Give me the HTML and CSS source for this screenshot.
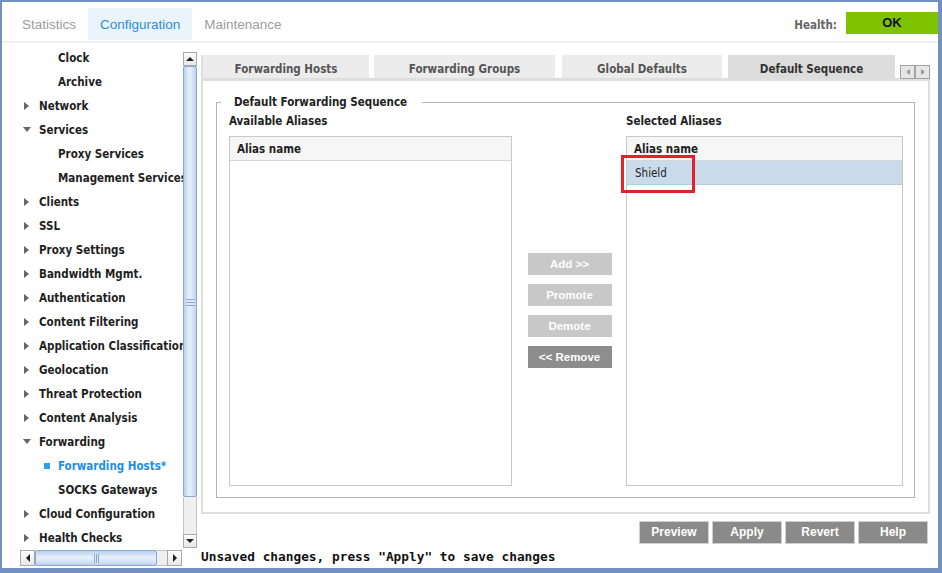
FILE: index.html
```html
<!DOCTYPE html>
<html>
<head>
<meta charset="utf-8">
<title>Configuration - Forwarding Hosts</title>
<link rel="stylesheet" href="styles.css">
</head>
<body>
<div class="frame">
  <header class="topbar">
    <nav class="nav">
      <a class="nav-tab">Statistics</a>
      <a class="nav-tab active">Configuration</a>
      <a class="nav-tab">Maintenance</a>
    </nav>
    <div class="health">
      <span class="health-label">Health:</span>
      <span class="health-ok">OK</span>
    </div>
  </header>

  <div class="main">
    <aside class="sidebar">
      <div class="tree-area">
        <div class="tree-view">
          <ul class="tree">
            <li class="l2">Clock</li>
            <li class="l2">Archive</li>
            <li class="l1 closed"><span class="tw"></span>Network</li>
            <li class="l1 open"><span class="tw"></span>Services</li>
            <li class="l2">Proxy Services</li>
            <li class="l2">Management Services</li>
            <li class="l1 closed"><span class="tw"></span>Clients</li>
            <li class="l1 closed"><span class="tw"></span>SSL</li>
            <li class="l1 closed"><span class="tw"></span>Proxy Settings</li>
            <li class="l1 closed"><span class="tw"></span>Bandwidth Mgmt.</li>
            <li class="l1 closed"><span class="tw"></span>Authentication</li>
            <li class="l1 closed"><span class="tw"></span>Content Filtering</li>
            <li class="l1 closed"><span class="tw"></span>Application Classification</li>
            <li class="l1 closed"><span class="tw"></span>Geolocation</li>
            <li class="l1 closed"><span class="tw"></span>Threat Protection</li>
            <li class="l1 closed"><span class="tw"></span>Content Analysis</li>
            <li class="l1 open"><span class="tw"></span>Forwarding</li>
            <li class="l2 current"><span class="dot"></span>Forwarding Hosts*</li>
            <li class="l2">SOCKS Gateways</li>
            <li class="l1 closed"><span class="tw"></span>Cloud Configuration</li>
            <li class="l1 closed"><span class="tw"></span>Health Checks</li>
          </ul>
        </div>
        <div class="vscroll">
          <div class="sb-btn up"></div>
          <div class="vthumb"><span class="grip"></span></div>
          <div class="vtrack"></div>
          <div class="sb-btn down"></div>
        </div>
      </div>
      <div class="hscroll">
        <div class="sb-btn left"></div>
        <div class="hthumb"><span class="grip"></span></div>
        <div class="htrack"></div>
        <div class="sb-btn right"></div>
      </div>
    </aside>

    <section class="content">
      <div class="tabs">
        <div class="tab tab-hosts">Forwarding Hosts</div>
        <div class="tab tab-groups">Forwarding Groups</div>
        <div class="tab tab-defaults">Global Defaults</div>
        <div class="tab tab-seq selected">Default Sequence</div>
        <div class="tab-arrows">
          <span class="tarrow prev"></span>
          <span class="tarrow next"></span>
        </div>
      </div>
      <div class="panel">
        <fieldset class="group">
          <legend>Default Forwarding Sequence</legend>
          <div class="alias-grid">
            <div class="col-label">Available Aliases</div>
            <div class="col-label sel-label">Selected Aliases</div>
            <div class="alias-table avail">
              <div class="th">Alias name</div>
            </div>
            <div class="mover">
              <div class="mbtn">Add &gt;&gt;</div>
              <div class="mbtn">Promote</div>
              <div class="mbtn">Demote</div>
              <div class="mbtn on">&lt;&lt; Remove</div>
            </div>
            <div class="alias-table chosen">
              <div class="th">Alias name</div>
              <div class="row">Shield</div>
              <div class="callout"></div>
            </div>
          </div>
        </fieldset>
      </div>
      <div class="actions">
        <div class="abtn">Preview</div>
        <div class="abtn">Apply</div>
        <div class="abtn">Revert</div>
        <div class="abtn">Help</div>
      </div>
      <div class="status">Unsaved changes, press "Apply" to save changes</div>
    </section>
  </div>
</div>
</body>
</html>
```

FILE: styles.css
```css
* { box-sizing: border-box; }

html, body {
  margin: 0;
  padding: 0;
  background: #ffffff;
}

body {
  font-family: "DejaVu Sans Condensed", "DejaVu Sans", sans-serif;
  font-stretch: condensed;
  font-size: 11.5px;
  color: #1f1f1f;
}

.frame {
  width: 942px;
  height: 573px;
  border: solid #7191c1;
  border-width: 2px 4px 5px 2px;
  display: flex;
  flex-direction: column;
  overflow: hidden;
  background: #fff;
}

/* ---------- top bar ---------- */
.topbar {
  height: 41px;
  flex: none;
  display: flex;
  justify-content: space-between;
  border-bottom: 2px solid #f1f1f1;
}

.nav {
  display: flex;
  padding: 6px 0 0 8px;
  font-family: "Liberation Sans", Arial, sans-serif;
  font-stretch: normal;
  font-size: 13.5px;
}

.nav-tab {
  height: 32px;
  line-height: 33px;
  padding: 0 12px;
  color: #9c9c9c;
}

.nav-tab.active {
  background: #eaf4fc;
  color: #2a8fd8;
}

.health {
  display: flex;
  align-items: flex-start;
  padding-top: 10px;
}

.health-label {
  font-weight: bold;
  color: #666;
  line-height: 22px;
  margin: 2px 9px 0 0;
}

.health-ok {
  width: 92px;
  height: 22px;
  background: #7fc300;
  font-family: "Liberation Sans", Arial, sans-serif;
  font-stretch: normal;
  font-weight: bold;
  font-size: 13px;
  color: #111;
  text-align: center;
  line-height: 21px;
}

/* ---------- main ---------- */
.main {
  flex: 1;
  display: flex;
  min-height: 0;
}

.sidebar {
  width: 195px;
  flex: none;
  display: flex;
  flex-direction: column;
}

.tree-area {
  display: flex;
  height: 505px;
}

.tree-view {
  width: 181px;
  overflow: hidden;
  padding-top: 3px;
}

.tree {
  list-style: none;
  margin: 0;
  padding: 0;
}

.tree li {
  height: 24px;
  line-height: 24px;
  white-space: nowrap;
  font-weight: bold;
  color: #1e1e1e;
}

.tree .l1 { padding-left: 22px; }
.tree .l2 { padding-left: 56px; }

.tw {
  display: inline-block;
  width: 0;
  height: 0;
  vertical-align: middle;
  position: relative;
  top: -1px;
}

.closed .tw {
  border-left: 5px solid #666;
  border-top: 4px solid transparent;
  border-bottom: 4px solid transparent;
  margin-right: 10px;
}

.open .tw {
  border-top: 5px solid #666;
  border-left: 4px solid transparent;
  border-right: 4px solid transparent;
  margin-left: -1px;
  margin-right: 8px;
}

.tree .current { color: #1d8ee0; }

.dot {
  display: inline-block;
  width: 6px;
  height: 6px;
  background: #2aa1e8;
  margin-left: -14px;
  margin-right: 8px;
  vertical-align: middle;
  position: relative;
  top: -1px;
}

/* ---------- drawn scrollbars ---------- */
.vscroll {
  width: 14px;
  margin-top: 9px;
  display: flex;
  flex-direction: column;
}

.sb-btn {
  flex: none;
  border: 1px solid #a9a9a9;
  background: linear-gradient(#fdfdfd, #e8e8e8);
  display: flex;
  align-items: center;
  justify-content: center;
}

.vscroll .sb-btn { height: 14px; }
.hscroll .sb-btn { width: 15px; }

.sb-btn::before {
  content: "";
  width: 0;
  height: 0;
}

.up::before {
  border-left: 4px solid transparent;
  border-right: 4px solid transparent;
  border-bottom: 4px solid #222;
}

.down::before {
  border-left: 4px solid transparent;
  border-right: 4px solid transparent;
  border-top: 4px solid #222;
}

.left::before {
  border-top: 4px solid transparent;
  border-bottom: 4px solid transparent;
  border-right: 4px solid #222;
}

.right::before {
  border-top: 4px solid transparent;
  border-bottom: 4px solid transparent;
  border-left: 4px solid #222;
}

.vthumb {
  height: 431px;
  flex: none;
  border: 1px solid #86a6d6;
  border-radius: 2px;
  background: linear-gradient(to right, #b9cfee, #e9f1fb 45%, #d6e4f6 75%, #bcd1ee);
  display: flex;
  align-items: center;
  justify-content: center;
  padding-top: 42px;
}

.vthumb .grip {
  width: 9px;
  height: 7px;
  background: repeating-linear-gradient(#8fa7d3 0 1px, #dde8f7 1px 3px);
}

.vtrack {
  flex: 1;
  background: #efefef;
  border-left: 1px solid #c4c4c4;
  border-right: 1px solid #c4c4c4;
}

.hscroll {
  display: flex;
  height: 16px;
  width: 162px;
  margin: 2px 0 0 18px;
}

.hthumb {
  width: 122px;
  flex: none;
  border: 1px solid #86a6d6;
  border-radius: 2px;
  background: linear-gradient(#b9cfee, #e9f1fb 45%, #d6e4f6 75%, #bcd1ee);
  display: flex;
  align-items: center;
  justify-content: center;
}

.hthumb .grip {
  width: 5px;
  height: 9px;
  background: repeating-linear-gradient(to right, #8fa7d3 0 1px, #dde8f7 1px 2px);
}

.htrack {
  flex: 1;
  background: #efefef;
  border-top: 1px solid #c4c4c4;
  border-bottom: 1px solid #c4c4c4;
}

/* ---------- content ---------- */
.content {
  width: 729px;
  flex: none;
  margin-left: 4px;
  padding-top: 12px;
  display: flex;
  flex-direction: column;
}

.tabs {
  display: flex;
  height: 23px;
  border-left: 2px solid #dedede;
}

.tab {
  flex: none;
  background: #ececec;
  color: #555;
  font-weight: bold;
  padding-top: 3px;
  line-height: 22px;
  text-align: center;
}

.tab-hosts { width: 166px; margin-right: 5px; }
.tab-groups { width: 181px; margin-right: 7px; }
.tab-defaults { width: 160px; margin-right: 6px; }
.tab-seq { width: 167px; }

.tab.selected {
  background: #dcdcdc;
  color: #333;
}

.tab-arrows {
  margin-left: auto;
  align-self: flex-end;
  display: flex;
  position: relative;
  top: 1px;
}

.tarrow {
  width: 15px;
  height: 14px;
  border: 1px solid #a4a4a4;
  background: #e6e6e6;
  display: flex;
  align-items: center;
  justify-content: center;
}

.tarrow::before {
  content: "";
  width: 0;
  height: 0;
  border-top: 3px solid transparent;
  border-bottom: 3px solid transparent;
}

.prev::before { border-right: 4px solid #9a9a9a; }
.next::before { border-left: 4px solid #9a9a9a; }

.panel {
  height: 436px;
  flex: none;
  border: 2px solid #dedede;
  border-top-width: 3px;
  padding: 13px 13px 14px 13px;
  display: flex;
  flex-direction: column;
}

.group {
  flex: 1;
  margin: 0;
  min-width: 0;
  border: 1px solid #b3b3b3;
  padding: 2px 11px 10px 12px;
}

.group legend {
  padding: 0 15px 0 13px;
  margin-left: -8px;
  font-weight: bold;
  line-height: 16px;
  color: #222;
}

.alias-grid {
  display: grid;
  grid-template-columns: 283px 114px 1fr;
  grid-template-rows: 16px 350px;
  row-gap: 8px;
}

.col-label {
  font-weight: bold;
  line-height: 16px;
  padding-top: 1px;
  color: #222;
}

.sel-label { grid-column: 3; }

.alias-table {
  grid-row: 2;
  border: 1px solid #c9c9c9;
  position: relative;
  background: #fff;
}

.avail { grid-column: 1; }
.chosen { grid-column: 3; }

.th {
  height: 24px;
  line-height: 21px;
  padding: 2px 0 0 7px;
  background: #f6f6f6;
  border-bottom: 1px solid #d6d6d6;
  font-weight: bold;
  color: #1e1e1e;
}

.row {
  height: 24px;
  line-height: 21px;
  padding: 2px 0 0 8px;
  background: #c9dbea;
  border-bottom: 1px solid #b9cadb;
  color: #1e1e1e;
}

.callout {
  position: absolute;
  left: -6px;
  top: 18px;
  width: 74px;
  height: 38px;
  border: 3px solid #e5202b;
}

.mover {
  grid-column: 2;
  grid-row: 2;
  display: flex;
  flex-direction: column;
  align-items: center;
  justify-content: center;
  gap: 9px;
  padding-left: 1px;
  padding-bottom: 2px;
}

.mbtn {
  width: 84px;
  height: 22px;
  line-height: 22px;
  background: #c8c8c8;
  color: #fff;
  text-align: center;
  font-family: "Liberation Sans", Arial, sans-serif;
  font-stretch: normal;
  font-weight: bold;
  font-size: 11.5px;
}

.mbtn.on { background: #8d8d8d; }

.actions {
  margin-top: 7px;
  display: flex;
  justify-content: flex-end;
  gap: 3px;
  padding-right: 2px;
}

.abtn {
  width: 70px;
  height: 23px;
  line-height: 21px;
  background: #8a8a8a;
  border: 1px solid #d0d0d0;
  color: #fff;
  text-align: center;
  font-family: "Liberation Sans", Arial, sans-serif;
  font-stretch: normal;
  font-weight: bold;
  font-size: 12px;
}

.status {
  margin-top: 5px;
  font-family: "DejaVu Sans Mono", "Liberation Mono", monospace;
  font-stretch: normal;
  font-weight: bold;
  font-size: 12.8px;
  line-height: 16px;
  color: #111;
  white-space: nowrap;
}
```
